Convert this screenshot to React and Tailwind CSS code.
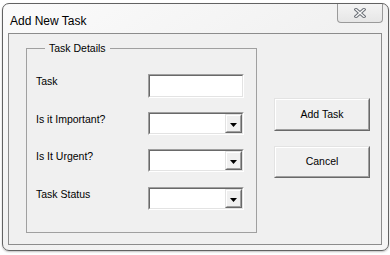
import React from "react";

function Sunken({ className = "", children }) {
  return (
    <div className={`border-t border-l border-t-[#a0a0a0] border-l-[#a0a0a0] border-b border-r border-b-white border-r-white ${className}`}>
      <div className="w-full h-full border-t border-l border-t-[#696969] border-l-[#696969] border-b border-r border-b-[#e3e3e3] border-r-[#e3e3e3] bg-white flex justify-end">
        {children}
      </div>
    </div>
  );
}

function Raised({ className = "", children }) {
  return (
    <div className={`border-t border-l border-t-[#e3e3e3] border-l-[#e3e3e3] border-b border-r border-b-[#696969] border-r-[#696969] ${className}`}>
      <div className="w-full h-full border-t border-l border-t-white border-l-white border-b border-r border-b-[#a0a0a0] border-r-[#a0a0a0] bg-[#f0f0f0] flex items-center justify-center">
        {children}
      </div>
    </div>
  );
}

function Combo() {
  return (
    <Sunken className="w-[96px] h-[23px]">
      <Raised className="w-[17px] h-full">
        <svg width="7" height="4" viewBox="0 0 7 4" className="mt-[2px]">
          <path d="M0 0h7L3.5 4z" fill="#000" />
        </svg>
      </Raised>
    </Sunken>
  );
}

function Row({ label, children, className = "" }) {
  return (
    <div className={`flex items-start ${className}`}>
      <span className="w-[112px] mt-[1px] leading-[13px]">{label}</span>
      {children}
    </div>
  );
}

export default function App() {
  return (
    <div
      className="w-[390px] h-[255px] bg-white overflow-hidden text-[10.5px] text-black"
      style={{ fontFamily: '"Liberation Sans", Arial, sans-serif' }}
    >
      <div className="ml-[2px] mt-[3px] w-[387px] h-[248px] rounded-[7px] border border-[#626262] bg-gradient-to-br from-[#fbfbfb] via-[#f1f1f1] to-[#f6f6f6] shadow-[0_1px_2px_rgba(0,0,0,0.25)] flex flex-col">
        {/* Title bar */}
        <div className="h-[29px] flex items-start">
          <span className="flex-1 pl-[7px] pt-[10px] text-[12px] leading-[14px]">Add New Task</span>
          <div className="w-[46px] h-[19px] mr-[5px] border border-t-0 border-[#9a9a9a] rounded-b-[4px] bg-gradient-to-b from-[#f4f4f4] to-[#e6e6e6] flex items-center justify-center">
            <svg width="12" height="10" viewBox="0 0 12 10">
              <path d="M2 1.5L10 8.5M10 1.5L2 8.5" stroke="#6a6f76" strokeWidth="3.4" strokeLinecap="square" />
              <path d="M2 1.5L10 8.5M10 1.5L2 8.5" stroke="#f8f8f8" strokeWidth="1.4" strokeLinecap="square" />
            </svg>
          </div>
        </div>

        {/* Client area */}
        <div className="ml-[5px] w-[374px] h-[212px] border border-[#8c8c8c] bg-[#f0f0f0] flex items-start">
          <fieldset className="ml-[17px] mt-[8px] w-[231px] h-[191px] border border-[#a0a0a0] pl-[9px]">
            <legend className="ml-[9px] px-[4px] leading-[13px]">Task Details</legend>
            <div className="flex flex-col mt-[19px]">
              <Row label="Task">
                <Sunken className="w-[96px] h-[24px]" />
              </Row>
              <Row label="Is it Important?" className="mt-[14px]">
                <Combo />
              </Row>
              <Row label="Is It Urgent?" className="mt-[14px]">
                <Combo />
              </Row>
              <Row label="Task Status" className="mt-[15px]">
                <Combo />
              </Row>
            </div>
          </fieldset>

          <div className="ml-[17px] mt-[64px] flex flex-col gap-[15px]">
            <Raised className="w-[96px] h-[33px]">Add Task</Raised>
            <Raised className="w-[96px] h-[32px]">Cancel</Raised>
          </div>
        </div>
      </div>
    </div>
  );
}
